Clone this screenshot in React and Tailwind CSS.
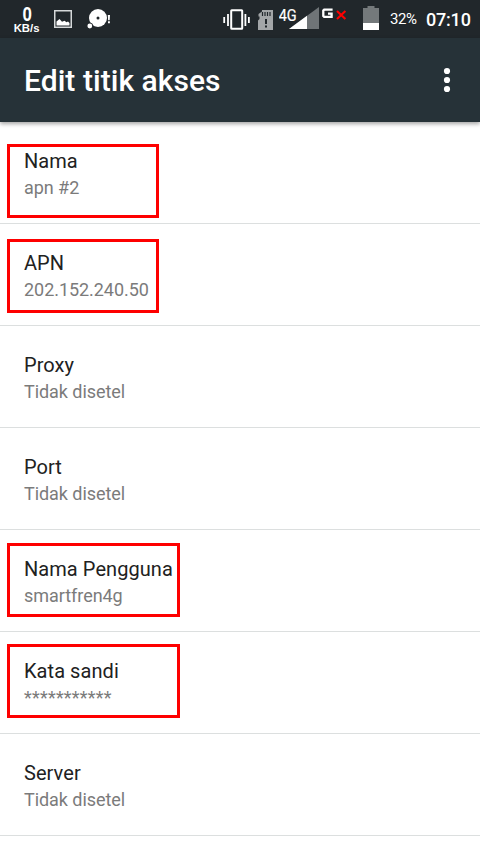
import React from "react";

const items = [
    { title: "Nama", value: "apn #2", mark: "left-[7px] top-[22px] w-[152px] h-[74px]" },
    { title: "APN", value: "202.152.240.50", mark: "left-[7px] top-[15px] w-[152px] h-[74px]" },
    { title: "Proxy", value: "Tidak disetel" },
    { title: "Port", value: "Tidak disetel" },
    { title: "Nama Pengguna", value: "smartfren4g", mark: "left-[7px] top-[13px] w-[173px] h-[74px]" },
    { title: "Kata sandi", value: "***********", secret: true, mark: "left-[7px] top-[12px] w-[173px] h-[74px]" },
    { title: "Server", value: "Tidak disetel" },
];

const NetSpeed = () => (
    <svg width="27" height="30" viewBox="0 0 27 30" className="ml-[13px] mt-[4px] shrink-0 font-[family-name:Liberation_Sans,sans-serif]" fill="#fff" fontWeight="700">
        <text x="9.4" y="16.6" fontSize="20" textLength="9.4" lengthAdjust="spacingAndGlyphs">0</text>
        <text x="0.7" y="27.6" fontSize="10.5" textLength="25.8" lengthAdjust="spacingAndGlyphs">KB/s</text>
    </svg>
);

const PictureIcon = () => (
    <svg width="18" height="18" viewBox="0 0 18 18" className="ml-[14px] mt-[10px] shrink-0">
        <rect x="0.75" y="0.75" width="16.5" height="16.5" fill="none" stroke="#d6d9da" strokeWidth="1.5" />
        <path d="M2.5 15.5V11.5L5.5 9L8 11.8L10.5 10.8L12.5 12.3L14 11.5L15.5 13V15.5Z" fill="#fff" />
    </svg>
);

const DiscIcon = () => (
    <svg width="24" height="20" viewBox="0 0 24 20" className="ml-[15px] mt-[9px] shrink-0">
        <circle cx="11" cy="9" r="9" fill="#fff" />
        <circle cx="11" cy="9" r="1.5" fill="#21272b" />
        <circle cx="2.8" cy="17" r="3.3" fill="#21272b" />
        <circle cx="2.8" cy="17" r="2.4" fill="#fff" />
        <path d="M20.8 6h2.2l-.3 5.2h-1.6zM21 12.3h1.9v1.9H21z" fill="#fff" />
    </svg>
);

const VibrateIcon = () => (
    <svg width="28" height="21" viewBox="0 0 28 21" className="mt-[9px] shrink-0">
        <rect x="8.2" y="1.2" width="11" height="18.6" rx="0.5" fill="none" stroke="#fff" strokeWidth="2" />
        <path d="M5 5v12M22.4 5v12M1.2 8v6M25.9 8v6" stroke="#fff" strokeWidth="1.8" />
    </svg>
);

const SdCardIcon = () => (
    <svg width="16" height="20" viewBox="0 0 16 20" className="ml-[7px] mt-[10px] shrink-0">
        <path d="M4 0H15V20H0V10.5L1.5 9V6.5H.5V4L4 1.5Z" fill="#a3a6a8" />
        <path d="M4.5 2v4M7 2v4M9.5 2v4M12 2v4" stroke="#21272b" strokeWidth="1.2" />
        <path d="M7 9h2v5H7zM7 15.5h2v2H7z" fill="#21272b" />
    </svg>
);

const SignalIcon = () => (
    <svg width="68" height="24" viewBox="0 0 68 24" className="ml-[5px] mt-[6px] shrink-0">
        <path d="M40 1V23H10Z" fill="#6f7477" />
        <path d="M28 9.8V23H10Z" fill="#fff" />
        <text x="-0.3" y="14.5" fill="#fff" stroke="#fff" strokeWidth="0.2" fontSize="16" textLength="18" lengthAdjust="spacingAndGlyphs">4G</text>
        <path d="M53.6 3.7H45.2L44.3 4.6V9.9L45.2 10.8H52.6V7.6H49" fill="none" stroke="#fff" strokeWidth="2.3" />
        <path d="M58 5L66.4 13M66.4 5L58 13" stroke="#f00" strokeWidth="2.1" />
    </svg>
);

const BatteryIcon = () => (
    <svg width="16" height="24" viewBox="0 0 16 24" className="ml-[16px] mt-[6px] shrink-0">
        <path d="M4.5 0h7v2H16V24H0V2H4.5Z" fill="#74797b" />
        <path d="M0 17H16V24H0Z" fill="#fff" />
    </svg>
);

const StatusBar = () => (
    <div className="flex h-[38px] items-start bg-[#21272b] text-white">
        <NetSpeed />
        <PictureIcon />
        <DiscIcon />
        <div className="ml-auto flex shrink-0">
            <VibrateIcon />
            <SdCardIcon />
            <SignalIcon />
            <BatteryIcon />
            <span className="ml-[11px] w-[28px] pt-[9px] text-[15px] leading-[20px] tracking-tight">32%</span>
            <span className="mr-[8px] ml-[8px] w-[46px] pt-[9px] text-[18px] leading-[22px] font-medium tracking-[-0.2px]">07:10</span>
        </div>
    </div>
);

const ListItem = ({ title, value, secret, mark }) => (
    <div className="relative h-[102px] border-b border-[#dcdfdf] pt-[25px] pl-6">
        <p className="text-[20px] leading-[28px] tracking-[0.06px] text-[#212121]">{title}</p>
        <p className={`text-[18px] leading-[25px] text-[#7b7b7b] ${secret ? "tracking-[0.22px]" : "tracking-[-0.05px]"}`}>
            {value}
        </p>
        {mark && <div className={`absolute border-3 border-[#fe0000] ${mark}`} />}
    </div>
);

const App = () => (
    <div className="h-[854px] w-[480px] overflow-hidden bg-white font-[family-name:Roboto,sans-serif]">
        <StatusBar />
        <header className="relative flex h-[84px] items-center justify-between bg-[#263238] pr-[29px] pl-6 shadow-[0_2px_4px_rgba(0,0,0,0.35)]">
            <h1 className="pt-[2px] text-[30px] leading-[36px] font-medium tracking-[0.05px] text-white">Edit titik akses</h1>
            <svg width="8" height="26" viewBox="0 0 8 26" fill="#fff">
                <circle cx="4" cy="4" r="3.1" />
                <circle cx="4" cy="13" r="3.1" />
                <circle cx="4" cy="22" r="3.1" />
            </svg>
        </header>
        <main>
            {items.map((item) => (
                <ListItem key={item.title} {...item} />
            ))}
        </main>
    </div>
);

export default App;
